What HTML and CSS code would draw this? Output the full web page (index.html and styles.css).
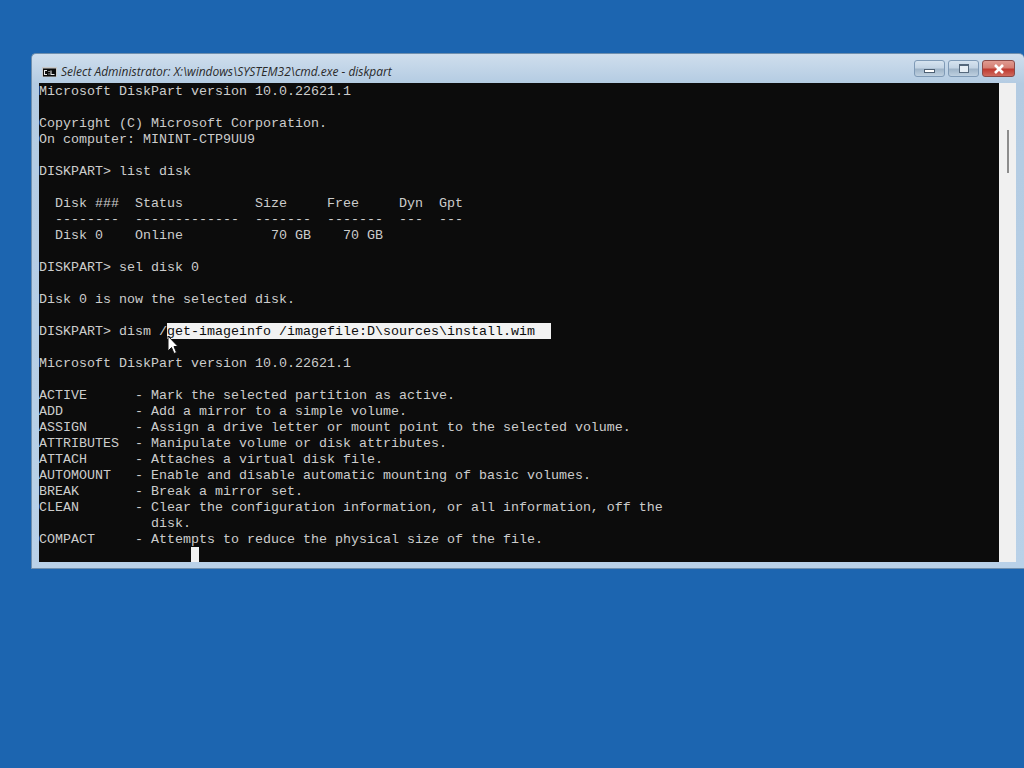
FILE: index.html
```html
<!DOCTYPE html>
<html lang="en">
<head>
<meta charset="utf-8">
<title>cmd.exe - diskpart</title>
<link rel="stylesheet" href="styles.css">
</head>
<body>
<div class="window">
  <div class="titlebar">
    <svg class="app-icon" width="15" height="10" viewBox="0 0 15 10">
      <rect width="15" height="10" fill="#c8c8c8"/>
      <rect x="1" y="1.5" width="13" height="8" fill="#0a0a0a"/>
      <path d="M5 3.5H2.5V7.5H5M7 4v1M7 6.5v1M9 3.5v4h3.5" fill="none" stroke="#e8e8e8" stroke-width="1.1"/>
    </svg>
    <span class="title">Select Administrator: X:\windows\SYSTEM32\cmd.exe - diskpart</span>
    <div class="controls">
      <div class="ctl"><span class="glyph-min"></span></div>
      <div class="ctl"><span class="glyph-max"></span></div>
      <div class="ctl close"><svg width="14" height="10" viewBox="0 0 14 10"><path d="M3 1l8 8M11 1l-8 8" stroke="#fff" stroke-width="2.6" fill="none"/></svg></div>
    </div>
  </div>
  <div class="body">
    <div class="console"><pre class="text">Microsoft DiskPart version 10.0.22621.1

Copyright (C) Microsoft Corporation.
On computer: MININT-CTP9UU9

DISKPART&gt; list disk

  Disk ###  Status         Size     Free     Dyn  Gpt
  --------  -------------  -------  -------  ---  ---
  Disk 0    Online           70 GB    70 GB

DISKPART&gt; sel disk 0

Disk 0 is now the selected disk.

DISKPART&gt; dism /<span class="sel">get-imageinfo /imagefile:D\sources\install.wim  </span>

Microsoft DiskPart version 10.0.22621.1

ACTIVE      - Mark the selected partition as active.
ADD         - Add a mirror to a simple volume.
ASSIGN      - Assign a drive letter or mount point to the selected volume.
ATTRIBUTES  - Manipulate volume or disk attributes.
ATTACH      - Attaches a virtual disk file.
AUTOMOUNT   - Enable and disable automatic mounting of basic volumes.
BREAK       - Break a mirror set.
CLEAN       - Clear the configuration information, or all information, off the
              disk.
COMPACT     - Attempts to reduce the physical size of the file.
                   <span class="cursor"> </span></pre></div>
    <div class="scrollbar"><div class="thumb"></div></div>
  </div>
  <svg class="pointer" width="12" height="20" viewBox="0 0 12 20">
    <path d="M1 1v15l3.5-3.5 2.5 6 2.5-1-2.5-6H11z" fill="#fff" stroke="#111" stroke-width="1"/>
  </svg>
</div>
</body>
</html>
```

FILE: styles.css
```css
html, body {
  margin: 0;
  height: 100%;
  overflow: hidden;
}
body {
  background: #1c65b0;
  position: relative;
}
.window {
  position: absolute;
  left: 31px;
  top: 53px;
  width: 993px;
  height: 516px;
  box-sizing: border-box;
  display: flex;
  flex-direction: column;
  border: 1px solid #6f8fae;
  border-right: none;
  border-radius: 5px 5px 0 0;
  padding: 0 8px 6px 7px;
  background: linear-gradient(180deg, #cfdeed 0, #b3cbe2 30px, #b9d1e8 100%);
}
.titlebar {
  flex: none;
  height: 29px;
  display: flex;
  align-items: center;
  gap: 4px;
  padding-left: 3px;
  padding-top: 6px;
  box-sizing: border-box;
}
.app-icon {
  flex: none;
}
.title {
  font: italic 12px "Open Sans", "Liberation Sans", sans-serif;
  letter-spacing: -0.01px;
  color: #2a2a2a;
  white-space: nowrap;
}
.controls {
  margin-left: auto;
  margin-right: 1px;
  display: flex;
  gap: 3px;
  margin-top: -6px;
}
.ctl {
  width: 31px;
  height: 17px;
  box-sizing: border-box;
  border: 1px solid #7f9ab6;
  border-radius: 3px;
  background: linear-gradient(180deg, #d6e3ef 0, #c3d4e4 45%, #9fb4c8 55%, #bed0e0 100%);
  display: flex;
  align-items: center;
  justify-content: center;
}
.ctl.close {
  width: 33px;
  border-color: #8a4a48;
  background: linear-gradient(180deg, #e09a90 0, #d57f74 45%, #bf3a30 55%, #cf6a5e 100%);
}
.glyph-min {
  width: 11px;
  height: 4px;
  margin-top: 4px;
  box-sizing: border-box;
  background: #fff;
  border: 1px solid #4d5f72;
}
.glyph-max {
  width: 10px;
  height: 9px;
  box-sizing: border-box;
  background: #e6eef5;
  border: 2px solid #55687c;
  border-width: 2px 1px 1px;
}
.body {
  flex: 1;
  min-height: 0;
  display: flex;
}
.console {
  flex: 1;
  min-width: 0;
  background: #0c0c0c;
  overflow: hidden;
}
.text {
  margin: 0;
  padding-top: 1px;
  font: 13.33px/16px "Liberation Mono", "DejaVu Sans Mono", monospace;
  color: #cccccc;
  white-space: pre;
}
.sel {
  background: #f2f2f2;
  box-shadow: 0 -1px 0 #f2f2f2;
  color: #0c0c0c;
}
.cursor {
  display: inline-block;
  width: 8px;
  height: 15px;
  background: #f2f2f2;
  box-shadow: 0 -1px 0 #f2f2f2;
}
.scrollbar {
  flex: none;
  width: 17px;
  background: #f0f0f0;
  position: relative;
}
.thumb {
  position: absolute;
  left: 8px;
  top: 47px;
  width: 2px;
  height: 43px;
  background: #8c8c8c;
}
.pointer {
  position: absolute;
  left: 135px;
  top: 281px;
}
```
